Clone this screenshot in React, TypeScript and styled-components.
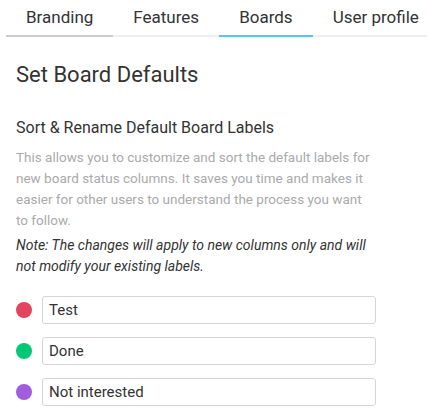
import React from "react";
import styled, { createGlobalStyle } from "styled-components";

const GlobalStyle = createGlobalStyle`
  body {
    margin: 0;
    background: #fff;
    font-family: Roboto, "Liberation Sans", sans-serif;
    color: #333;
    overflow-x: hidden;
  }
`;

const tabs = ["Branding", "Features", "Boards", "User profile"];

const labels = [
  { name: "Test", color: "#e2445c" },
  { name: "Done", color: "#00c875" },
  { name: "Not interested", color: "#a25ddc" },
];

const TabBar = styled.div`
  display: flex;
  margin-left: 6px;
  white-space: nowrap;
  overflow: hidden;
`;

const Tab = styled.div<{ $state?: "active" | "hover" }>`
  flex-shrink: 0;
  padding: 0 20px;
  height: 35px;
  line-height: 35px;
  font-size: 17px;
  color: #333;
  border-bottom: 2px solid
    ${(p) => (p.$state === "active" ? "#5bc4ee" : p.$state === "hover" ? "#cccccc" : "#efefef")};
`;

const Content = styled.div`
  width: 360px;
  padding: 0 16px;
`;

const Title = styled.h1`
  margin: 23px 0 0;
  font-size: 22px;
  line-height: 30px;
  font-weight: 400;
  color: #333;
`;

const SubTitle = styled.h2`
  margin: 26px 0 0;
  font-size: 16px;
  line-height: 24px;
  font-weight: 400;
  color: #333;
`;

const Description = styled.p`
  margin: 7px 0 0;
  font-size: 13.5px;
  line-height: 21px;
  color: #aaa;
`;

const Note = styled.p`
  margin: 4px 0 0;
  font-size: 14px;
  line-height: 21px;
  font-style: italic;
  color: #333;
`;

const LabelList = styled.div`
  display: flex;
  flex-direction: column;
  gap: 13px;
  margin-top: 19px;
`;

const LabelRow = styled.div`
  display: flex;
  align-items: center;
  gap: 10px;
`;

const Dot = styled.span<{ $color: string }>`
  width: 16px;
  height: 16px;
  border-radius: 50%;
  background: ${(p) => p.$color};
  flex-shrink: 0;
`;

const LabelInput = styled.input`
  box-sizing: border-box;
  flex: 1;
  height: 28px;
  padding: 0 6px;
  border: 1px solid #d5d5d5;
  border-radius: 3px;
  font-family: Roboto, "Liberation Sans", sans-serif;
  font-size: 15px;
  color: #333;
  outline: none;
`;

export default function App() {
  return (
    <>
      <GlobalStyle />
      <TabBar>
        {tabs.map((t) => (
          <Tab key={t} $state={t === "Boards" ? "active" : t === "Branding" ? "hover" : undefined}>
            {t}
          </Tab>
        ))}
      </TabBar>
      <Content>
        <Title>Set Board Defaults</Title>
        <SubTitle>Sort &amp; Rename Default Board Labels</SubTitle>
        <Description>
          This allows you to customize and sort the default labels for new board status columns. It saves you
          time and makes it easier for other users to understand the process you want to follow.
        </Description>
        <Note>Note: The changes will apply to new columns only and will not modify your existing labels.</Note>
        <LabelList>
          {labels.map((l) => (
            <LabelRow key={l.name}>
              <Dot $color={l.color} />
              <LabelInput defaultValue={l.name} />
            </LabelRow>
          ))}
        </LabelList>
      </Content>
    </>
  );
}
